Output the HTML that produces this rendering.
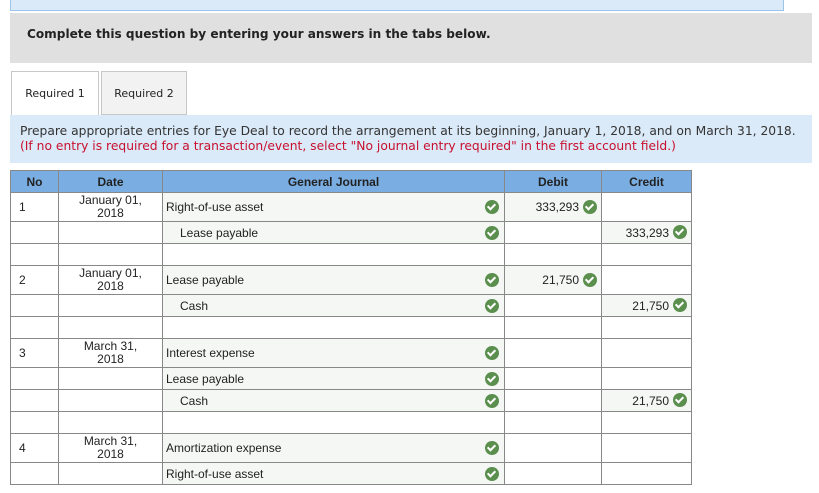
<!DOCTYPE html>
<html><head><style>
body{margin:0;width:819px;height:493px;background:#fff;font-family:"Liberation Sans",Arial,sans-serif;overflow:hidden;position:relative}
.top{position:absolute;left:10px;top:-1px;width:772px;height:10px;background:#dbeaf8;border:1px solid #9cc3e8}
.gray{position:absolute;left:10px;top:13px;width:802px;height:50px;background:#e0e0e0}
.gray div{position:absolute;left:17px;top:14px;font-family:"DejaVu Sans",sans-serif;font-weight:bold;font-size:12.1px;color:#222}
.tab{position:absolute;top:71px;height:44px;font-family:"DejaVu Sans",sans-serif;font-size:11px;color:#222;text-align:center;line-height:44px;border:1px solid #c8c8c8;box-sizing:border-box}
.inst{position:absolute;left:10px;top:115px;width:802px;height:48px;background:#dbeaf8;font-family:"DejaVu Sans",sans-serif;font-size:12.3px;line-height:15px}
.inst div{position:absolute;left:10px;top:9px;white-space:nowrap;color:#333}
table{position:absolute;left:10px;top:170px;border-collapse:collapse;font-size:12px;color:#222}
td,th{border:1px solid #888;padding:0;box-sizing:border-box}
th{background:#7aaee3;height:22px;font-weight:bold;font-size:12px}
td.s{background:#f5f7f4}
.d{text-align:center;line-height:13px;font-size:12px}
.n{padding-left:8px}
.g{padding-left:3px;position:relative}
.g2{padding-left:17px;position:relative}
.c{display:inline-block;width:14px;height:14px;border-radius:50%;background:#5b8f4e;vertical-align:middle;position:relative}
.c:after{content:"";position:absolute;left:4px;top:2px;width:3px;height:6px;border:solid #fff;border-width:0 2px 2px 0;transform:rotate(45deg)}
.g .c,.g2 .c{position:absolute;right:5px;top:50%;margin-top:-7px}
.r{text-align:right;padding-right:4px}
.r .c{margin-left:4px;margin-top:-2px}
</style></head><body>
<div class="top"></div>
<div class="gray"><div>Complete this question by entering your answers in the tabs below.</div></div>
<div class="tab" style="left:11px;width:88px;background:#fff;border-bottom:none;height:45px">Required 1</div>
<div class="tab" style="left:101px;width:86px;background:#f2f2f2">Required 2</div>
<div class="inst"><div>Prepare appropriate entries for Eye Deal to record the arrangement at its beginning, January 1, 2018, and on March 31, 2018.<br><span style="color:#c8102e">(If no entry is required for a transaction/event, select "No journal entry required" in the first account field.)</span></div></div>
<table>
<colgroup><col style="width:48px"><col style="width:104px"><col style="width:342px"><col style="width:97px"><col style="width:90px"></colgroup>
<tr><th>No</th><th>Date</th><th>General Journal</th><th>Debit</th><th>Credit</th></tr>
<tr style="height:29px"><td class="n">1</td><td class="d">January 01,<br>2018</td><td class="s g">Right-of-use asset<span class="c"></span></td><td class="s r">333,293<span class="c"></span></td><td></td></tr>
<tr style="height:22px"><td></td><td></td><td class="s g2">Lease payable<span class="c"></span></td><td></td><td class="s r">333,293<span class="c"></span></td></tr>
<tr style="height:22px"><td></td><td></td><td></td><td></td><td></td></tr>
<tr style="height:29px"><td class="n">2</td><td class="d">January 01,<br>2018</td><td class="s g">Lease payable<span class="c"></span></td><td class="s r">21,750<span class="c"></span></td><td></td></tr>
<tr style="height:22px"><td></td><td></td><td class="s g2">Cash<span class="c"></span></td><td></td><td class="s r">21,750<span class="c"></span></td></tr>
<tr style="height:22px"><td></td><td></td><td></td><td></td><td></td></tr>
<tr style="height:29px"><td class="n">3</td><td class="d">March 31,<br>2018</td><td class="s g">Interest expense<span class="c"></span></td><td></td><td></td></tr>
<tr style="height:22px"><td></td><td></td><td class="s g">Lease payable<span class="c"></span></td><td></td><td></td></tr>
<tr style="height:22px"><td></td><td></td><td class="s g2">Cash<span class="c"></span></td><td></td><td class="s r">21,750<span class="c"></span></td></tr>
<tr style="height:22px"><td></td><td></td><td></td><td></td><td></td></tr>
<tr style="height:29px"><td class="n">4</td><td class="d">March 31,<br>2018</td><td class="s g">Amortization expense<span class="c"></span></td><td></td><td></td></tr>
<tr style="height:22px"><td></td><td></td><td class="s g">Right-of-use asset<span class="c"></span></td><td></td><td></td></tr>
</table>
</body></html>
